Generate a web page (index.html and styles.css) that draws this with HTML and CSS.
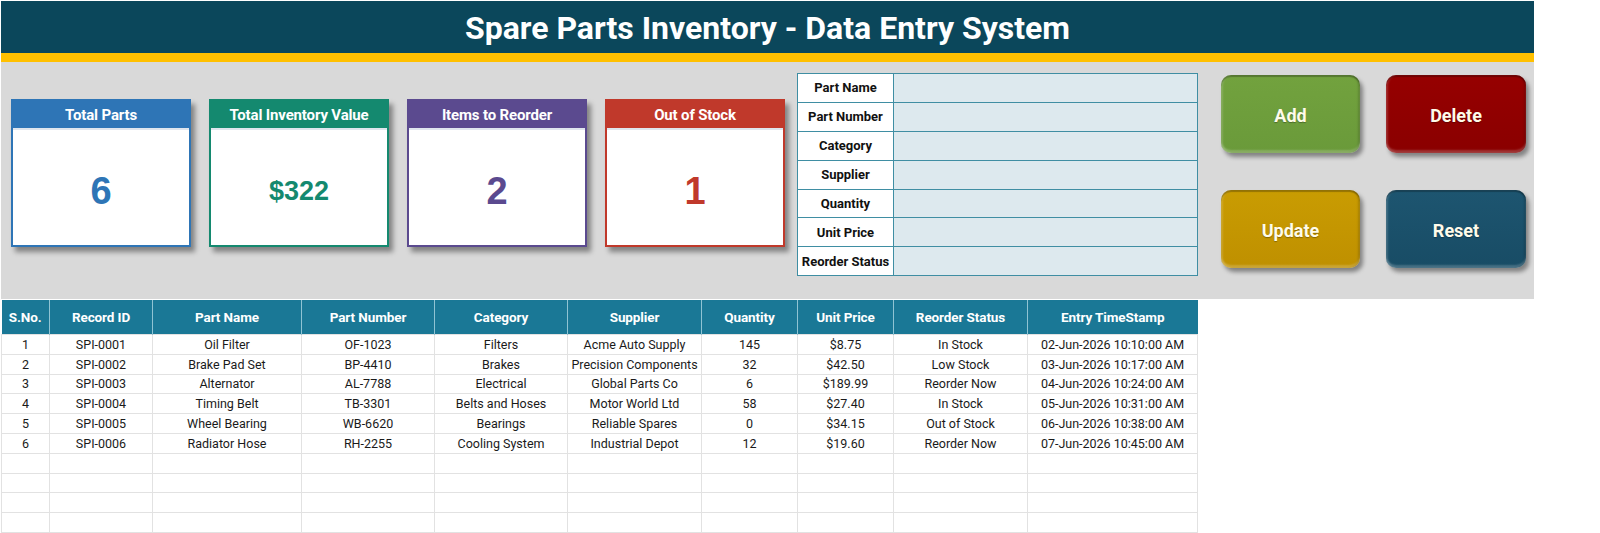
FILE: index.html
```html
<!DOCTYPE html>
<html lang="en">
<head>
  <meta charset="UTF-8" />
  <title>Spare Parts Inventory - Data Entry System</title>
  <link rel="stylesheet" href="styles.css">
</head>
<body>
  <div class="sheet">
    <header class="title-bar">Spare Parts Inventory - Data Entry System</header>
    <div class="accent-bar"></div>

    <section class="panel">
      <div class="cards">
        <div class="card card-blue">
          <div class="card-head">Total Parts</div>
          <div class="card-value">6</div>
        </div>
        <div class="card card-teal">
          <div class="card-head">Total Inventory Value</div>
          <div class="card-value small">$322</div>
        </div>
        <div class="card card-purple">
          <div class="card-head">Items to Reorder</div>
          <div class="card-value">2</div>
        </div>
        <div class="card card-red">
          <div class="card-head">Out of Stock</div>
          <div class="card-value">1</div>
        </div>
      </div>

      <div class="entry-form">
        <div class="field"><label>Part Name</label><div class="input"></div></div>
        <div class="field"><label>Part Number</label><div class="input"></div></div>
        <div class="field"><label>Category</label><div class="input"></div></div>
        <div class="field"><label>Supplier</label><div class="input"></div></div>
        <div class="field"><label>Quantity</label><div class="input"></div></div>
        <div class="field"><label>Unit Price</label><div class="input"></div></div>
        <div class="field"><label>Reorder Status</label><div class="input"></div></div>
      </div>

      <div class="actions">
        <button class="action green">Add</button>
        <button class="action maroon">Delete</button>
        <button class="action gold">Update</button>
        <button class="action navy">Reset</button>
      </div>
    </section>

    <table class="records">
      <colgroup>
        <col style="width:48px"><col style="width:103px"><col style="width:149px"><col style="width:133px">
        <col style="width:133px"><col style="width:134px"><col style="width:96px"><col style="width:96px">
        <col style="width:134px"><col style="width:170px">
      </colgroup>
      <thead>
        <tr>
          <th>S.No.</th><th>Record ID</th><th>Part Name</th><th>Part Number</th><th>Category</th>
          <th>Supplier</th><th>Quantity</th><th>Unit Price</th><th>Reorder Status</th><th>Entry TimeStamp</th>
        </tr>
      </thead>
      <tbody>
        <tr><td>1</td><td>SPI-0001</td><td>Oil Filter</td><td>OF-1023</td><td>Filters</td><td>Acme Auto Supply</td><td>145</td><td>$8.75</td><td>In Stock</td><td>02-Jun-2026 10:10:00 AM</td></tr>
        <tr><td>2</td><td>SPI-0002</td><td>Brake Pad Set</td><td>BP-4410</td><td>Brakes</td><td>Precision Components</td><td>32</td><td>$42.50</td><td>Low Stock</td><td>03-Jun-2026 10:17:00 AM</td></tr>
        <tr><td>3</td><td>SPI-0003</td><td>Alternator</td><td>AL-7788</td><td>Electrical</td><td>Global Parts Co</td><td>6</td><td>$189.99</td><td>Reorder Now</td><td>04-Jun-2026 10:24:00 AM</td></tr>
        <tr><td>4</td><td>SPI-0004</td><td>Timing Belt</td><td>TB-3301</td><td>Belts and Hoses</td><td>Motor World Ltd</td><td>58</td><td>$27.40</td><td>In Stock</td><td>05-Jun-2026 10:31:00 AM</td></tr>
        <tr><td>5</td><td>SPI-0005</td><td>Wheel Bearing</td><td>WB-6620</td><td>Bearings</td><td>Reliable Spares</td><td>0</td><td>$34.15</td><td>Out of Stock</td><td>06-Jun-2026 10:38:00 AM</td></tr>
        <tr><td>6</td><td>SPI-0006</td><td>Radiator Hose</td><td>RH-2255</td><td>Cooling System</td><td>Industrial Depot</td><td>12</td><td>$19.60</td><td>Reorder Now</td><td>07-Jun-2026 10:45:00 AM</td></tr>
        <tr><td></td><td></td><td></td><td></td><td></td><td></td><td></td><td></td><td></td><td></td></tr>
        <tr><td></td><td></td><td></td><td></td><td></td><td></td><td></td><td></td><td></td><td></td></tr>
        <tr><td></td><td></td><td></td><td></td><td></td><td></td><td></td><td></td><td></td><td></td></tr>
        <tr><td></td><td></td><td></td><td></td><td></td><td></td><td></td><td></td><td></td><td></td></tr>
      </tbody>
    </table>
  </div>
</body>
</html>
```

FILE: styles.css
```css
body {
  margin: 0;
  padding: 1px 0 0 1px;
  background: #ffffff;
  font-family: Roboto, "Liberation Sans", sans-serif;
  color: #222;
}

.sheet {
  width: 1533px;
}

.title-bar {
  height: 52px;
  background-color: #0b475b;
  color: white;
  display: flex;
  align-items: center;
  justify-content: center;
  font-size: 32px;
  font-weight: bold;
  padding-top: 1px;
  box-sizing: border-box;
}

.accent-bar {
  height: 9px;
  background-color: #ffc000;
}

.panel {
  height: 237px;
  background-color: #d9d9d9;
  display: flex;
  align-items: flex-start;
  padding-left: 10px;
}

.cards {
  display: flex;
  gap: 18px;
  margin-top: 37px;
}

.card {
  width: 180px;
  height: 148px;
  box-sizing: border-box;
  background: white;
  border: 2px solid;
  display: flex;
  flex-direction: column;
  box-shadow: 4px 5px 5px rgba(0,0,0,0.4);
}

.card-head {
  height: 27px;
  display: flex;
  align-items: center;
  justify-content: center;
  color: white;
  font-weight: bold;
  font-size: 15px;
  letter-spacing: -0.15px;
  border-bottom: 2px solid #dfe6ee;
}

.card-value {
  flex: 1;
  display: flex;
  align-items: center;
  justify-content: center;
  font-family: "Liberation Sans", Arial, sans-serif;
  font-weight: bold;
  font-size: 38px;
  padding-top: 7px;
}

.card-value.small {
  font-size: 27px;
}

.card-blue { border-color: #2e75b6; }
.card-blue .card-head { background-color: #2e75b6; }
.card-blue .card-value { color: #2e75b6; }

.card-teal { border-color: #14896f; }
.card-teal .card-head { background-color: #14896f; }
.card-teal .card-value { color: #14896f; }

.card-purple { border-color: #5b4a8f; }
.card-purple .card-head { background-color: #5b4a8f; }
.card-purple .card-value { color: #5b4a8f; }

.card-red { border-color: #c0392b; }
.card-red .card-head { background-color: #c0392b; }
.card-red .card-value { color: #c0392b; }

.entry-form {
  margin-top: 11px;
  margin-left: 12px;
  width: 399px;
  border: 1px solid #3f8ea3;
  border-bottom: none;
  display: flex;
  flex-direction: column;
}

.field {
  height: 27.9px;
  display: flex;
  border-bottom: 1px solid #3f8ea3;
}

.field label {
  width: 95px;
  background: white;
  border-right: 1px solid #3f8ea3;
  display: flex;
  align-items: center;
  justify-content: center;
  font-size: 13px;
  font-weight: bold;
  color: #111;
  white-space: nowrap;
}

.field .input {
  flex: 1;
  background-color: #dde9ee;
}

.actions {
  margin-top: 13px;
  margin-left: 23px;
  display: grid;
  grid-template-columns: 139px 140px;
  grid-template-rows: 78px 78px;
  column-gap: 26px;
  row-gap: 37px;
}

.action {
  border: none;
  border-radius: 10px;
  color: #fffbea;
  font-family: Roboto, "Liberation Sans", sans-serif;
  font-size: 18px;
  font-weight: bold;
  padding-top: 4px;
  text-shadow: 0 1px 1px rgba(0,0,0,0.3);
  box-shadow: 3px 4px 4px rgba(0,0,0,0.4),
              inset 0 2px 1px rgba(0,0,0,0.25),
              inset 0 -3px 2px rgba(255,255,255,0.2),
              inset 2px 0 2px rgba(255,255,255,0.15),
              inset -2px 0 2px rgba(0,0,0,0.15);
  cursor: pointer;
}

.action.green { background: linear-gradient(#72a23e, #6a9a3a); }
.action.maroon { background: linear-gradient(#960000, #8a0000); }
.action.gold { background: linear-gradient(#c99c02, #bf9000); }
.action.navy { background: linear-gradient(#1d5570, #184c65); }

.records {
  margin-top: 1px;
  width: 1196px;
  border-collapse: collapse;
  table-layout: fixed;
  font-size: 12.5px;
}

.records th {
  height: 34px;
  background-color: #1a7896;
  color: white;
  font-weight: bold;
  font-size: 13.5px;
  letter-spacing: -0.1px;
  border-left: 1px solid #8fc3d3;
  padding: 0;
}

.records th:first-child {
  border-left: none;
}

.records td {
  height: 18.8px;
  border: 1px solid #e2e2e2;
  text-align: center;
  padding: 0;
  white-space: nowrap;
  overflow: hidden;
  color: #1a1a1a;
}
```
